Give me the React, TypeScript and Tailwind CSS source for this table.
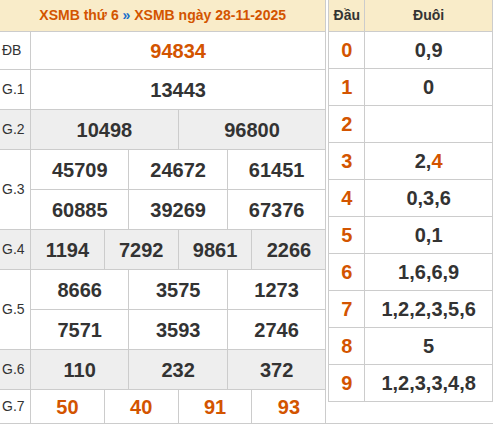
import React from 'react';

type Prize = {
  label: string;
  nums: string[][];
  span: string;
  gray?: boolean;
  red?: boolean;
  h: string;
};

const prizes: Prize[] = [
  { label: 'ĐB', nums: [['94834']], span: 'col-span-12', red: true, h: 'h-[37px]' },
  { label: 'G.1', nums: [['13443']], span: 'col-span-12', h: 'h-[39px]' },
  { label: 'G.2', nums: [['10498', '96800']], span: 'col-span-6', gray: true, h: 'h-[39px]' },
  { label: 'G.3', nums: [['45709', '24672', '61451'], ['60885', '39269', '67376']], span: 'col-span-4', h: 'h-[39px]' },
  { label: 'G.4', nums: [['1194', '7292', '9861', '2266']], span: 'col-span-3', gray: true, h: 'h-[39px]' },
  { label: 'G.5', nums: [['8666', '3575', '1273'], ['7571', '3593', '2746']], span: 'col-span-4', h: 'h-[39px]' },
  { label: 'G.6', nums: [['110', '232', '372']], span: 'col-span-4', gray: true, h: 'h-[39px]' },
  { label: 'G.7', nums: [['50', '40', '91', '93']], span: 'col-span-3', red: true, h: 'h-[33px]' },
];

const loto: { head: string; tail: React.ReactNode }[] = [
  { head: '0', tail: '0,9' },
  { head: '1', tail: '0' },
  { head: '2', tail: '' },
  { head: '3', tail: <>2,<span className="text-[#d35400]">4</span></> },
  { head: '4', tail: '0,3,6' },
  { head: '5', tail: '0,1' },
  { head: '6', tail: '1,6,6,9' },
  { head: '7', tail: '1,2,2,3,5,6' },
  { head: '8', tail: '5' },
  { head: '9', tail: '1,2,3,3,4,8' },
];

const ResultTable = () => (
  <div className="w-[327px] border-r border-[#ccc] bg-[#ccc] grid grid-cols-[30px_repeat(12,minmax(0,1fr))] gap-px">
    <div className="col-span-13 h-[31px] bg-[#f9ecc9] flex items-center justify-center text-[14px] font-bold text-[#d35400]">
      XSMB thứ 6&nbsp;<span className="text-[#1a6fc9]">»</span>&nbsp;XSMB ngày 28-11-2025
    </div>
    {prizes.map((p) => {
      const bg = p.gray ? 'bg-[#eeeeee]' : 'bg-white';
      return (
        <React.Fragment key={p.label}>
          <div className={`${bg} ${p.nums.length > 1 ? 'row-span-2' : ''} flex items-center pl-[2px] text-[14px] text-[#333]`}>
            {p.label}
          </div>
          {p.nums.map((row, i) =>
            row.map((n, j) => (
              <div
                key={`${i}-${j}`}
                className={`${p.span} ${p.h} ${bg} flex items-center justify-center text-[20px] font-bold ${p.red ? 'text-[#d35400]' : 'text-[#333]'}`}
              >
                {n}
              </div>
            ))
          )}
        </React.Fragment>
      );
    })}
  </div>
);

const LotoTable = () => (
  <div className="self-start w-[165px] border border-t-0 border-[#ccc] bg-[#ccc] grid grid-cols-[35px_1fr] gap-px">
    <div className="h-[31px] bg-[#f9ecc9] flex items-center justify-center text-[14px] font-bold text-[#333]">Đầu</div>
    <div className="h-[31px] bg-[#f9ecc9] flex items-center justify-center text-[14px] font-bold text-[#333]">Đuôi</div>
    {loto.map((r) => (
      <React.Fragment key={r.head}>
        <div className="h-[36px] bg-white flex items-center justify-center text-[20px] font-bold text-[#d35400]">{r.head}</div>
        <div className="h-[36px] bg-white flex items-center justify-center text-[20px] font-bold text-[#333]">{r.tail}</div>
      </React.Fragment>
    ))}
  </div>
);

export default function App() {
  return (
    <div className="w-[493px] h-[424px] bg-white border-b border-[#ccc] flex gap-[2px] overflow-hidden" style={{ fontFamily: '"Liberation Sans", Arial, sans-serif' }}>
      <ResultTable />
      <LotoTable />
    </div>
  );
}
